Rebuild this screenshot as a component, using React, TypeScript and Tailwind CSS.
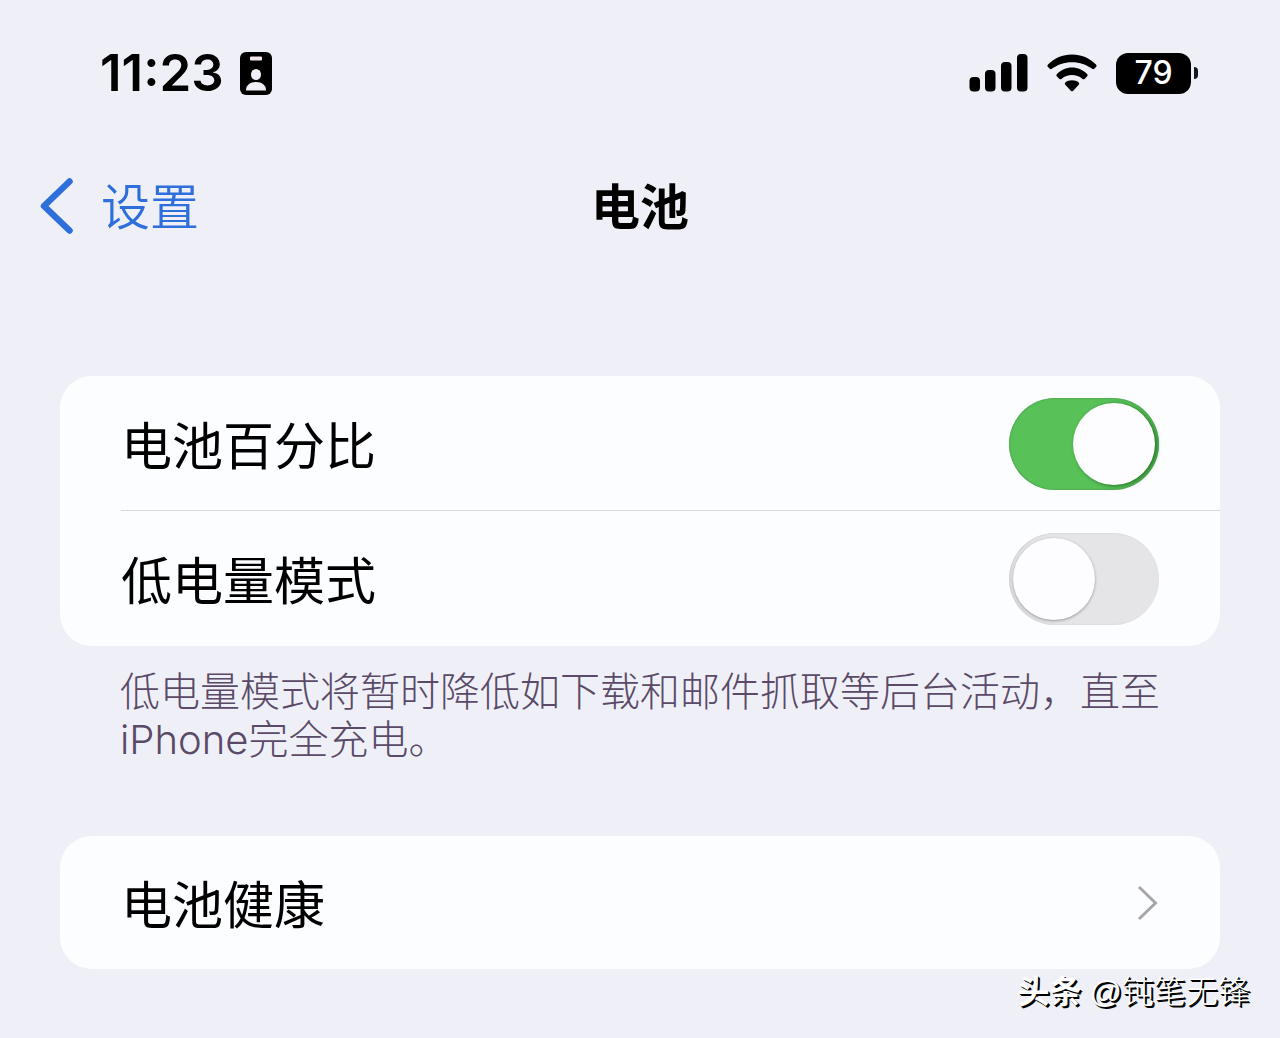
import { useState } from "react";

const CJK = "font-['Inter','Noto_Sans_CJK_SC',sans-serif]";

function IdBadgeIcon() {
  return (
    <svg width="32" height="43" viewBox="0 0 32 43" aria-hidden="true">
      <rect x="0" y="0" width="32" height="43" rx="6" fill="#000" />
      <rect x="10" y="4.500" width="12" height="4" rx="1" fill="#f3e6ea" />
      <ellipse cx="16" cy="22.500" rx="5" ry="5.500" fill="#f0f0f8" />
      <path d="M6 38.500c0-5.500 4-8.500 10-8.500s10 3 10 8.500z" fill="#f0f0f8" />
    </svg>
  );
}

function SignalIcon() {
  return (
    <svg width="59" height="38" viewBox="0 0 59 38" aria-hidden="true">
      <rect x="0.500" y="23" width="10.500" height="14.500" rx="4" />
      <rect x="16" y="16" width="10.500" height="21.500" rx="4" />
      <rect x="32" y="8" width="10.500" height="29.500" rx="4" />
      <rect x="48" y="0" width="10.500" height="37.500" rx="4" />
    </svg>
  );
}

function WifiIcon() {
  return (
    <svg width="50" height="38" viewBox="0 0 50 38" aria-hidden="true">
      <path d="M1 10.500C7.500 4 15.500.5 25 .5S42.500 4 49 10.500c.8.8.8 1.800 0 2.600l-1.500 1.500c-.8.8-1.800.8-2.600 0C39 10.500 33 8.200 25 8.200S11 10.500 5.100 14.600c-.8.8-1.800.8-2.600 0L1 13.100c-.8-.8-.8-1.800 0-2.600z" />
      <path d="M10 20c4-4 9-6.500 15-6.500S36 16 40 20c.8.8.8 1.700 0 2.500l-2.200 2.200c-.8.8-1.700.8-2.500 0-3-2.400-6.300-3.700-10.300-3.700s-7.300 1.300-10.300 3.700c-.8.8-1.700.8-2.500 0L10 22.500c-.8-.8-.8-1.700 0-2.500z" />
      <path d="M18.300 28.600c1.500-1.600 4-2.400 6.700-2.400s5.200.8 6.700 2.400c.7.800.6 1.600 0 2.200l-5.500 5.900c-.8.8-1.600.8-2.400 0l-5.500-5.900c-.6-.6-.7-1.400 0-2.200z" />
    </svg>
  );
}

function BatteryIcon({ level }: { level: number }) {
  return (
    <div className="flex items-center gap-[3px]">
      <div className="flex h-[41px] w-[75px] items-center justify-center rounded-xl bg-black text-[32px] font-medium leading-none text-white">
        {level}
      </div>
      <div className="h-3 w-1 rounded-r-full bg-[#101824]" />
    </div>
  );
}

function StatusBar() {
  return (
    <div className="flex items-center justify-between pl-[100px] pr-[82px] pt-[43px]">
      <div className="flex items-center gap-4">
        <time className="text-[51px] font-semibold leading-[60px]">11:23</time>
        <IdBadgeIcon />
      </div>
      <div className="flex items-center gap-[19px]">
        <SignalIcon />
        <WifiIcon />
        <BatteryIcon level={79} />
      </div>
    </div>
  );
}

function NavBar() {
  return (
    <header className="grid grid-cols-[1fr_auto_1fr] items-center px-10 pt-[67px]">
      <a href="#settings" className="flex items-center gap-7 justify-self-start text-[#2f6fdc]">
        <svg width="33" height="56" viewBox="0 0 33 56" fill="none" aria-hidden="true">
          <path d="M29.500 3.500 4 28l25.500 24.500" stroke="currentColor" strokeWidth="6.500" strokeLinecap="round" strokeLinejoin="round" />
        </svg>
        <span className="pt-1 text-[49px] font-[350] leading-[68px]">设置</span>
      </a>
      <h1 className="pt-1 text-[49px] font-bold leading-[68px]">电池</h1>
    </header>
  );
}

function ToggleRow({ id, label, initial }: { id: string; label: string; initial: boolean }) {
  const [on, setOn] = useState(initial);
  return (
    <div className="flex h-[135px] items-center justify-between pr-[61px]">
      <label htmlFor={id} className="pt-1.5 text-[51px] leading-[72px]">
        {label}
      </label>
      <input
        id={id}
        type="checkbox"
        role="switch"
        checked={on}
        onChange={(e) => setOn(e.target.checked)}
        className="flex h-[92px] w-[150px] shrink-0 appearance-none items-center rounded-full bg-[#e5e5e8] px-1 shadow-[inset_1px_0_2px_#c8cacc] before:size-[82px] before:rounded-full before:bg-[#fdfdff] before:shadow-[0_1px_3px_rgba(0,0,0,0.35)] before:content-[''] checked:justify-end checked:bg-[#58c258] checked:shadow-[inset_0_0_2px_#3f7f45] checked:before:shadow-[2px_1px_4px_rgba(0,60,0,0.6)]"
      />
    </div>
  );
}

export default function App() {
  return (
    <div className={`flex min-h-screen flex-col bg-[#eff0f7] text-black ${CJK}`} lang="zh-CN">
      <StatusBar />
      <NavBar />
      <main className="px-[60px] pt-[134px]">
        <section className="rounded-[32px] bg-[#fcfdff] pl-[61px]">
          <ToggleRow id="battery-percentage" label="电池百分比" initial={true} />
          <div className="-mt-px h-px bg-[#d3dae0]" />
          <ToggleRow id="low-power" label="低电量模式" initial={false} />
        </section>
        <p className="px-[60px] pt-[22px] text-[40px] font-light leading-[48px] text-[#5a4a68]">
          低电量模式将暂时降低如下载和邮件抓取等后台活动，直至iPhone完全充电。
        </p>
        <a href="#battery-health" className="mt-[72px] flex h-[133px] items-center justify-between rounded-[32px] bg-[#fcfdff] pl-[61px] pr-[62px]">
          <span className="pt-1.5 text-[51px] leading-[72px]">电池健康</span>
          <svg width="21" height="36" viewBox="0 0 21 36" fill="none" aria-hidden="true">
            <path d="M2 2 18.500 18 2 34" stroke="#a9a6a9" strokeWidth="3" />
          </svg>
        </a>
      </main>
      <footer className="flex justify-end gap-2 pr-[30px] font-['Liberation_Sans','Noto_Sans_CJK_SC',sans-serif] text-[32px] leading-[46px] text-white [text-shadow:1px_1px_0_#000,2px_2px_0_#000]">
        <span className="font-bold">头条</span>
        <span className="font-light">@钝笔无锋</span>
      </footer>
    </div>
  );
}
